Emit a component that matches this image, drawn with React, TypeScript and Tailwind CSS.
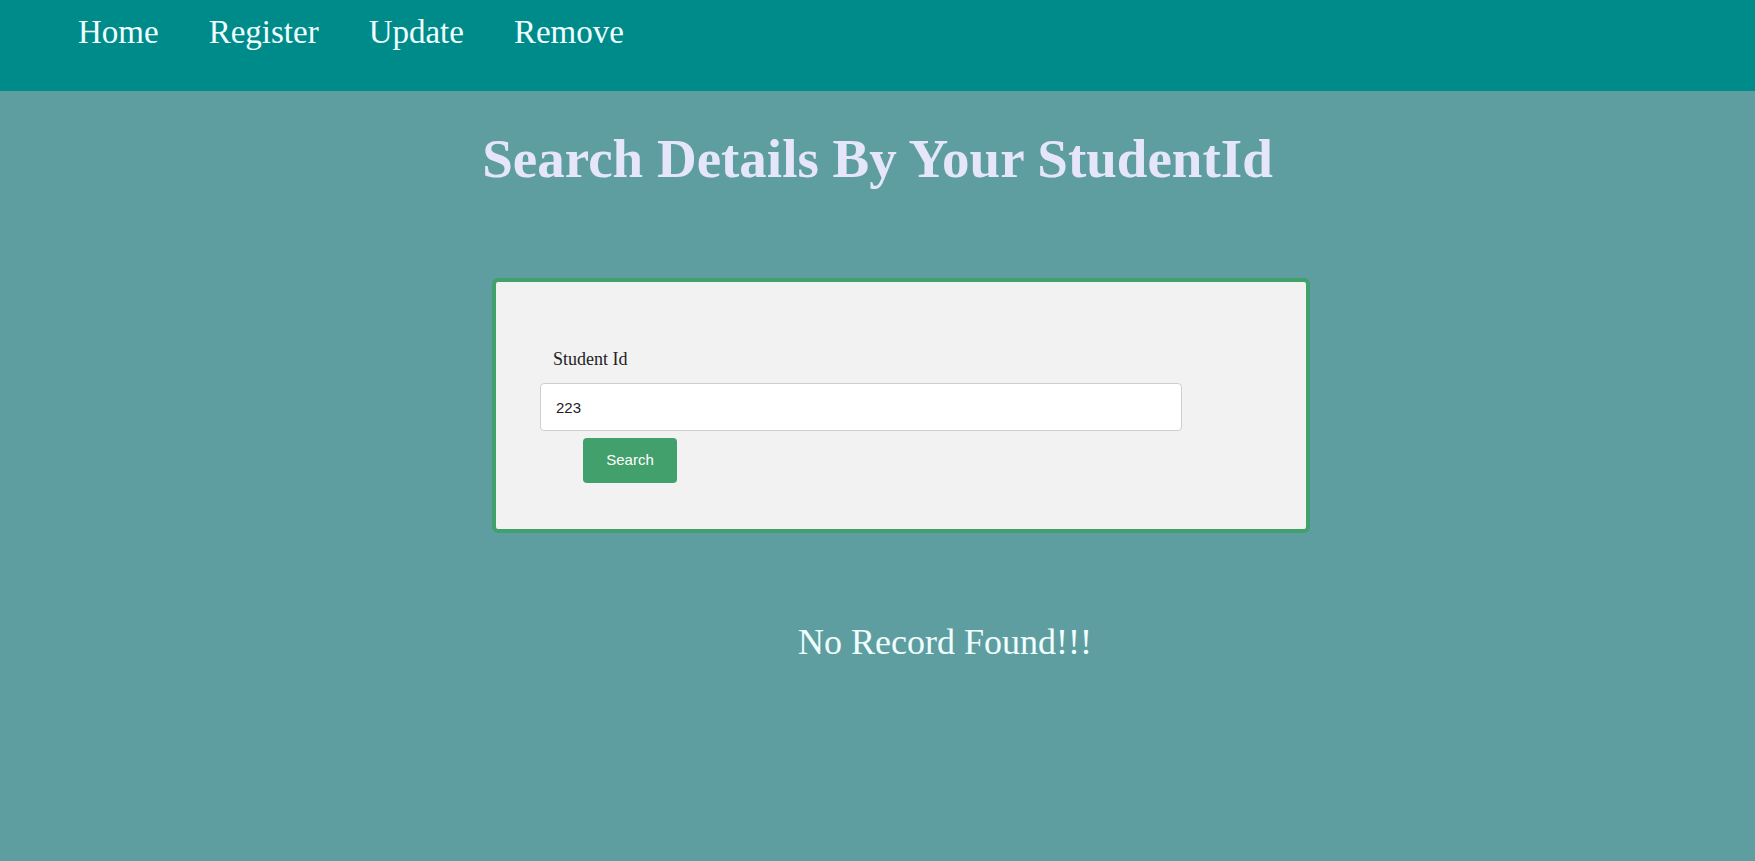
import React, { useState } from 'react';

const links = ['Home', 'Register', 'Update', 'Remove'];

const App: React.FC = () => {
  const [studentId, setStudentId] = useState('223');

  return (
    <div className="min-h-screen bg-[#5f9ea0] font-['Liberation_Serif','Times_New_Roman',serif]">
      <nav className="h-[91px] bg-[#008b8b] pl-[78px] pt-[16px]">
        <ul className="flex gap-[50px]">
          {links.map((link) => (
            <li key={link}>
              <a href="#" className="block text-[33px] leading-[33px] text-[#f0ffff]">
                {link}
              </a>
            </li>
          ))}
        </ul>
      </nav>

      <h1 className="mt-[40px] text-center text-[55px] font-bold leading-[55px] text-[#e6e6fa]">
        Search Details By Your StudentId
      </h1>

      <div className="ml-[492px] mt-[92px] w-[818px] rounded-[6px] border-4 border-[#41a06c] bg-[#f2f2f2] pb-[46px] pl-[44px] pt-[68px]">
        <label htmlFor="studentId" className="ml-[13px] block text-[18px] leading-[18px] text-[#222]">
          Student Id
        </label>
        <input
          id="studentId"
          type="text"
          value={studentId}
          onChange={(e) => setStudentId(e.target.value)}
          className="mt-[15px] block h-[48px] w-[642px] rounded-[4px] border border-[#cfcfcf] bg-white px-[15px] font-['Liberation_Sans',Arial,sans-serif] text-[15px] text-[#222] focus:outline-none"
        />
        <button className="ml-[43px] mt-[7px] block h-[45px] w-[94px] rounded-[4px] bg-[#41a06c] font-['Liberation_Sans',Arial,sans-serif] text-[15px] text-white">
          Search
        </button>
      </div>

      <h2 className="ml-[798px] mt-[91px] text-[36px] leading-[36px] text-[#f0ffff]">No Record Found!!!</h2>
    </div>
  );
};

export default App;
